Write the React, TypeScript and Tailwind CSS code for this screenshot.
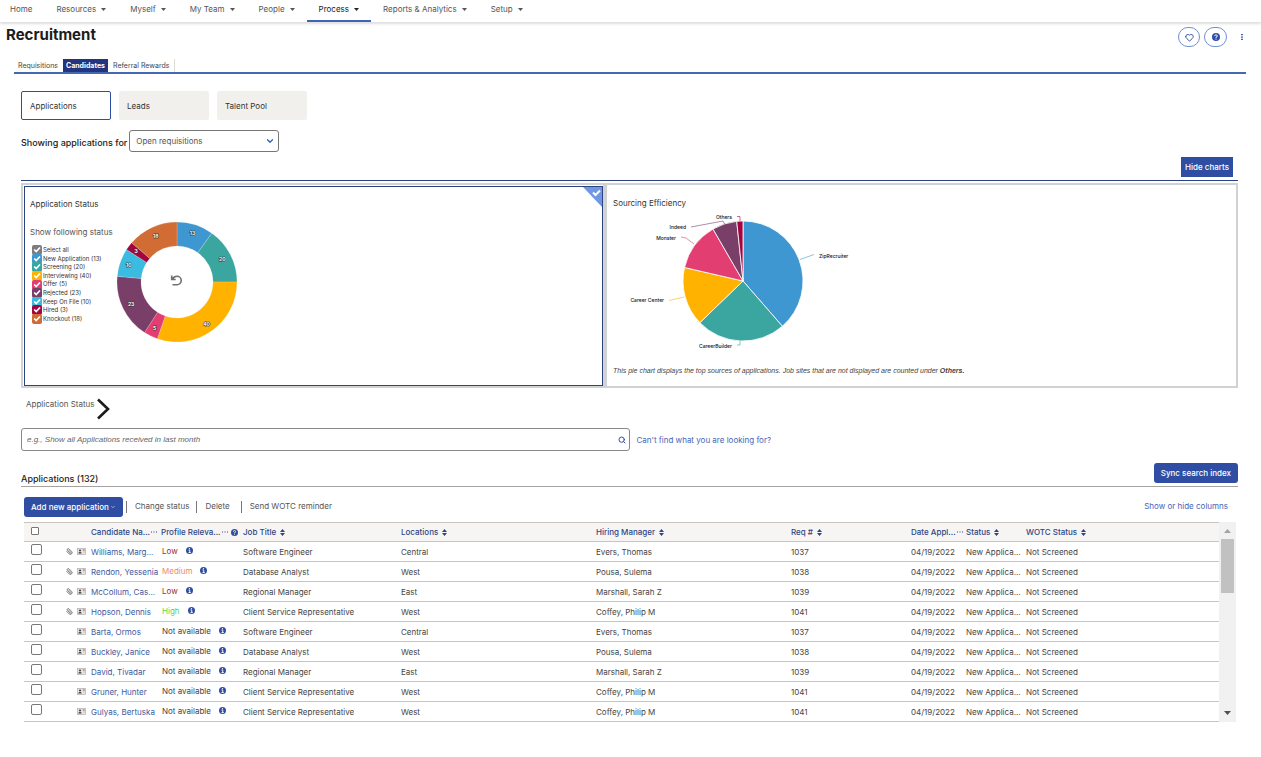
import type { ReactNode } from "react";
import { ChevronDown, Heart, Paperclip, Search } from "lucide-react";

type Slice = { label: string; value: number; color: string };

type Row = {
  name: string;
  relevance: "Low" | "Medium" | "High" | "Not available";
  job: string;
  location: string;
  manager: string;
  req: string;
  attachment?: boolean;
};

const navItems = ["Home", "Resources", "Myself", "My Team", "People", "Process", "Reports & Analytics", "Setup"];

const statuses: Slice[] = [
  { label: "New Application", value: 13, color: "#3e97d1" },
  { label: "Screening", value: 20, color: "#3ba69f" },
  { label: "Interviewing", value: 40, color: "#ffb300" },
  { label: "Offer", value: 5, color: "#e23e72" },
  { label: "Rejected", value: 23, color: "#7a3f69" },
  { label: "Keep On File", value: 10, color: "#3bbbe0" },
  { label: "Hired", value: 3, color: "#a3063f" },
  { label: "Knockout", value: 18, color: "#d06c34" },
];

// value is the share of the circle in degrees
const sources: Slice[] = [
  { label: "ZipRecruiter", value: 139, color: "#3e97d1" },
  { label: "CareerBuilder", value: 87, color: "#3ba69f" },
  { label: "Career Center", value: 57, color: "#ffb300" },
  { label: "Monster", value: 47, color: "#e23e72" },
  { label: "Indeed", value: 24, color: "#7a3f69" },
  { label: "Others", value: 6, color: "#a3063f" },
];

const rows: Row[] = [
  { name: "Williams, Marg...", relevance: "Low", job: "Software Engineer", location: "Central", manager: "Evers, Thomas", req: "1037", attachment: true },
  { name: "Rendon, Yessenia", relevance: "Medium", job: "Database Analyst", location: "West", manager: "Pousa, Sulema", req: "1038", attachment: true },
  { name: "McCollum, Cas...", relevance: "Low", job: "Regional Manager", location: "East", manager: "Marshall, Sarah Z", req: "1039", attachment: true },
  { name: "Hopson, Dennis", relevance: "High", job: "Client Service Representative", location: "West", manager: "Coffey, Philip M", req: "1041", attachment: true },
  { name: "Barta, Ormos", relevance: "Not available", job: "Software Engineer", location: "Central", manager: "Evers, Thomas", req: "1037" },
  { name: "Buckley, Janice", relevance: "Not available", job: "Database Analyst", location: "West", manager: "Pousa, Sulema", req: "1038" },
  { name: "David, Tivadar", relevance: "Not available", job: "Regional Manager", location: "East", manager: "Marshall, Sarah Z", req: "1039" },
  { name: "Gruner, Hunter", relevance: "Not available", job: "Client Service Representative", location: "West", manager: "Coffey, Philip M", req: "1041" },
  { name: "Gulyas, Bertuska", relevance: "Not available", job: "Client Service Representative", location: "West", manager: "Coffey, Philip M", req: "1041" },
];

const relevanceColor = {
  Low: "text-[#a02a2a]",
  Medium: "text-[#f08a5c]",
  High: "text-[#4fd84f]",
  "Not available": "text-[#444]",
};

function point(cx: number, cy: number, r: number, deg: number) {
  const a = ((deg - 90) * Math.PI) / 180;
  return `${(cx + r * Math.cos(a)).toFixed(2)} ${(cy + r * Math.sin(a)).toFixed(2)}`;
}

function arcs(data: Slice[], cx: number, cy: number, outer: number, inner: number) {
  const total = data.reduce((sum, d) => sum + d.value, 0);
  let start = 0;
  return data.map((d) => {
    const end = start + (d.value / total) * 360;
    const large = end - start > 180 ? 1 : 0;
    const mid = (start + end) / 2;
    const path =
      `M${point(cx, cy, outer, start)} A${outer} ${outer} 0 ${large} 1 ${point(cx, cy, outer, end)} ` +
      `L${point(cx, cy, inner, end)} A${inner} ${inner} 0 ${large} 0 ${point(cx, cy, inner, start)} Z`;
    start = end;
    return { ...d, path, mid };
  });
}

function StatusDonut() {
  return (
    <svg width="122" height="122" viewBox="0 0 122 122" role="img" aria-label="Applications by status">
      {arcs(statuses, 61, 61, 60, 36).map((s) => {
        const [x, y] = point(61, 61, 51, s.mid).split(" ").map(Number);
        return (
          <g key={s.label}>
            <path d={s.path} fill={s.color} stroke="#fff" strokeOpacity="0.35" strokeWidth="0.5" />
            <text x={x} y={y + 2} textAnchor="middle" className="fill-white stroke-[#333] text-[5px] font-bold [paint-order:stroke] [stroke-width:1px]">
              {s.value}
            </text>
          </g>
        );
      })}
      <path d="M55.700 54.500V58.500H59.700M56.200 58.200C57.500 56.200 59.200 55.300 61 55.300A4.200 4.200 0 0 1 61 63.700H56.500" fill="none" stroke="#707070" strokeWidth="1.600" />
    </svg>
  );
}

function SourcePie() {
  return (
    <svg width="230" height="142" viewBox="0 0 230 142" role="img" aria-label="Applications by source">
      {arcs(sources, 113, 70, 60, 0).map((s) => (
        <path key={s.label} d={s.path} fill={s.color} stroke="#fff" strokeWidth="0.8" />
      ))}
      <g fill="none" strokeWidth="0.6">
        <path d="M170 48.500L184 43.500" stroke="#3e97d1" />
        <path d="M110 130V134H107" stroke="#3ba69f" />
        <path d="M54.500 86L39 89.500" stroke="#ffb300" />
        <path d="M64 33L56 27L51 26" stroke="#e23e72" />
        <path d="M94.500 13L93 10L61 16" stroke="#7a3f69" />
        <path d="M110 10V5.500H107" stroke="#a3063f" />
      </g>
      <g className="fill-[#111] text-[5px] font-medium">
        <text x="189" y="47">ZipRecruiter</text>
        <text x="102" y="137" textAnchor="end">CareerBuilder</text>
        <text x="34" y="91" textAnchor="end">Career Center</text>
        <text x="46" y="29" textAnchor="end">Monster</text>
        <text x="56" y="18" textAnchor="end">Indeed</text>
        <text x="102" y="8" textAnchor="end">Others</text>
      </g>
    </svg>
  );
}

function Caret() {
  return (
    <svg width="5" height="3" viewBox="0 0 5 3" className="fill-current" aria-hidden="true">
      <path d="M0 0H5L2.500 3Z" />
    </svg>
  );
}

function HelpIcon({ size = 8 }: { size?: number }) {
  return (
    <svg width={size} height={size} viewBox="0 0 16 16" className="shrink-0" aria-hidden="true">
      <circle cx="8" cy="8" r="8" fill="#2f4ea3" />
      <path d="M5.500 6.200A2.500 2.500 0 1 1 8 8.500V10" fill="none" stroke="#fff" strokeWidth="1.800" />
      <circle cx="8" cy="12.200" r="1.200" fill="#fff" />
    </svg>
  );
}

function InfoIcon() {
  return (
    <svg width="7" height="7" viewBox="0 0 14 14" aria-hidden="true">
      <circle cx="7" cy="7" r="7" fill="#2f4ea3" />
      <path d="M5 6H7.500V11M5 11H9.500" fill="none" stroke="#fff" strokeWidth="1.800" />
      <circle cx="7" cy="3.400" r="1.300" fill="#fff" />
    </svg>
  );
}

function CardIcon() {
  return (
    <svg width="9" height="7" viewBox="0 0 18 14" aria-hidden="true">
      <rect x="0.800" y="0.800" width="16.400" height="12.400" fill="#e8e8e8" stroke="#b0b0b0" strokeWidth="1.400" />
      <circle cx="6" cy="5" r="2.200" fill="#444" />
      <path d="M2.500 11C2.500 7 9.500 7 9.500 11Z" fill="#444" />
      <path d="M11.500 4H15.500" stroke="#b33" strokeWidth="1.800" />
      <path d="M13 8H15" stroke="#888" strokeWidth="1.400" />
    </svg>
  );
}

function SortIcon() {
  return (
    <svg width="5" height="7" viewBox="0 0 5 7" fill="#2f4584" className="shrink-0" aria-hidden="true">
      <path d="M2.500 0L5 3H0ZM2.500 7L0 4H5Z" />
    </svg>
  );
}

function Head({ children, dots, help }: { children: ReactNode; dots?: boolean; help?: boolean }) {
  return (
    <th scope="col" className="p-0 text-left font-medium">
      <button type="button" className={dots ? "flex items-center gap-px whitespace-nowrap" : "flex items-center gap-1 whitespace-nowrap"}>
        {children}
        {dots ? (
          <svg width="6" height="2" viewBox="0 0 6 2" fill="#2f4584" aria-hidden="true">
            <path d="M0 0.500H1V1.500H0ZM2.500 0.500H3.500V1.500H2.500ZM5 0.500H6V1.500H5Z" />
          </svg>
        ) : (
          <SortIcon />
        )}
        {help ? <span className="ml-[2px]"><HelpIcon size={7} /></span> : null}
      </button>
    </th>
  );
}

function StatusOption({ id, label, color }: { id: string; label: string; color: string }) {
  return (
    <div className="flex items-center gap-px">
      <span className="grid h-[10px] w-[10px] shrink-0">
        <input id={id} type="checkbox" defaultChecked className="col-start-1 row-start-1 h-[10px] w-[10px] appearance-none rounded-[2px]" style={{ backgroundColor: color }} />
        <svg viewBox="0 0 10 10" className="pointer-events-none col-start-1 row-start-1 h-[10px] w-[10px]" aria-hidden="true">
          <path d="M2.200 4.500L4.200 6.500L8 2.500" fill="none" stroke="#fff" strokeWidth="1.700" />
        </svg>
      </span>
      <label htmlFor={id} className="whitespace-nowrap text-[6px] leading-[8px] text-[#333]">{label}</label>
    </div>
  );
}

function Toolbar() {
  return (
    <div className="flex items-center pl-[3px] pr-[10px] pt-[10px] text-[#555]">
      <button type="button" className="flex h-5 items-center gap-px rounded-[3px] bg-[#2f4ea3] px-[7px] font-medium text-white">
        Add new application
        <ChevronDown className="h-[6px] w-[6px]" />
      </button>
      <span className="ml-[3px] h-3 w-px bg-[#777]" />
      <button type="button" className="pb-[2px] pl-2 pr-1">Change status</button>
      <span className="ml-[3px] h-3 w-px bg-[#777]" />
      <button type="button" className="px-2 pb-[2px]">Delete</button>
      <span className="ml-[3px] h-3 w-px bg-[#777]" />
      <button type="button" className="px-2 pb-[2px]">Send WOTC reminder</button>
      <a href="#columns" className="ml-auto pb-[2px] text-[#4565b8]">Show or hide columns</a>
    </div>
  );
}

function ApplicationsTable() {
  return (
    <div className="mt-[5px] flex pl-[3px] pr-[2px]">
      <table className="w-full min-w-0 table-fixed border-collapse text-[#444]">
        <colgroup>
          <col className="w-[41px]" />
          <col className="w-[26px]" />
          <col className="w-[70px]" />
          <col className="w-[82px]" />
          <col className="w-[158px]" />
          <col className="w-[195px]" />
          <col className="w-[195px]" />
          <col className="w-[120px]" />
          <col className="w-[55px]" />
          <col className="w-[60px]" />
          <col />
        </colgroup>
        <thead>
          <tr className="h-[19px] border-y border-[#c9c4bd] bg-[#f6f5f4] text-[#2f4584]">
            <th scope="col" className="p-0 pb-[2px] text-left">
              <input type="checkbox" aria-label="Select all applications" className="ml-[7px] block h-2 w-2 appearance-none rounded-[1px] border border-[#777] bg-white" />
            </th>
            <td className="p-0" />
            <Head dots>Candidate Na...</Head>
            <Head dots help>Profile Releva...</Head>
            <Head>Job Title</Head>
            <Head>Locations</Head>
            <Head>Hiring Manager</Head>
            <Head>Req #</Head>
            <Head dots>Date Appl...</Head>
            <Head>Status</Head>
            <Head>WOTC Status</Head>
          </tr>
        </thead>
        <tbody>
          {rows.map((row) => (
            <tr key={row.name} className="h-5 border-b border-[#c9c4bd] whitespace-nowrap">
              <td className="p-0 pb-1">
                <input type="checkbox" aria-label={`Select ${row.name}`} className="ml-[7px] block h-[11px] w-[11px] appearance-none rounded-[2px] border border-[#777] bg-white" />
              </td>
              <td className="p-0">
                <span className="flex items-center justify-end gap-1 pr-[5px]">
                  {row.attachment ? <Paperclip className="h-[7px] w-[7px] -scale-x-100 text-[#555]" strokeWidth={2.5} /> : null}
                  <CardIcon />
                </span>
              </td>
              <td className="p-0"><a href="#candidate" className="text-[#4059a0]">{row.name}</a></td>
              <td className="p-0 pb-[2px]">
                <span className={`flex items-center gap-2 pl-px ${relevanceColor[row.relevance]}`}>
                  {row.relevance}
                  <InfoIcon />
                </span>
              </td>
              <td className="p-0">{row.job}</td>
              <td className="p-0">{row.location}</td>
              <td className="p-0">{row.manager}</td>
              <td className="p-0">{row.req}</td>
              <td className="p-0">04/19/2022</td>
              <td className="p-0">New Applica...</td>
              <td className="p-0">Not Screened</td>
            </tr>
          ))}
        </tbody>
      </table>
      <div className="flex w-[17px] shrink-0 flex-col items-center bg-[#f1f1f1]" aria-hidden="true">
        <svg width="7" height="4" viewBox="0 0 7 4" className="mb-[6px] mt-[7px] shrink-0"><path d="M3.500 0L7 4H0Z" fill="#a3a3a3" /></svg>
        <span className="h-[54px] w-[13px] shrink-0 bg-[#c1c1c1]" />
        <svg width="7" height="4" viewBox="0 0 7 4" className="mb-[7px] mt-auto shrink-0"><path d="M0 0H7L3.500 4Z" fill="#505050" /></svg>
      </div>
    </div>
  );
}

export default function App() {
  return (
    <div className="min-h-screen bg-white font-['Inter','Liberation_Sans',sans-serif] text-[8px] leading-[12px] text-[#333]">
      <nav className="flex h-[23px] items-stretch border-b border-[#e3e3e3] shadow-sm">
        {navItems.map((item) => {
          const active = item === "Process";
          const home = item === "Home";
          return (
            <a
              key={item}
              href={`#${item}`}
              className={
                active
                  ? "flex items-center gap-[5px] border-b-2 border-[#3f64b5] px-3 pb-[2px] text-[#222]"
                  : home
                    ? "flex items-center pb-1 pl-[10px] pr-3 text-[#555]"
                    : "flex items-center gap-[5px] px-3 pb-1 text-[#555]"
              }
            >
              {item}
              {home ? null : <Caret />}
            </a>
          );
        })}
      </nav>

      <header className="flex h-[36px] items-start justify-between pl-[6px] pr-[15px]">
        <h1 className="pt-[2px] text-[15px] font-bold leading-[20px] text-[#1c1c1c]">Recruitment</h1>
        <div className="flex items-center gap-1 pt-1">
          <button type="button" aria-label="Favorite" className="grid h-5 w-[22px] place-items-center rounded-full border border-[#6f8fd6] text-[#2f4ea3]">
            <Heart className="h-[9px] w-[9px]" strokeWidth={2.5} />
          </button>
          <button type="button" aria-label="Help" className="grid h-5 w-[23px] place-items-center rounded-full border border-[#6f8fd6]">
            <HelpIcon />
          </button>
          <button type="button" aria-label="More" className="ml-[7px] grid h-5 w-2 place-items-center">
            <svg width="2" height="6" viewBox="0 0 2 6" fill="#4a65ad"><path d="M0 0H2V1.300H0ZM0 2.400H2V3.700H0ZM0 4.700H2V6H0Z" /></svg>
          </button>
        </div>
      </header>

      <div className="ml-[14px] mr-[15px] flex border-b-2 border-[#4568b5] text-[7px] leading-[13px]">
        <button type="button" className="pl-1 pr-[5px] text-[#444]">Requisitions</button>
        <button type="button" className="bg-[#22357e] px-[3px] font-bold text-white">Candidates</button>
        <button type="button" className="border-r border-[#ddd] px-[5px] text-[#444]">Referral Rewards</button>
      </div>

      <main className="pl-[21px] pr-[23px] pt-[17px]">
        <div className="flex gap-2">
          <button type="button" className="h-[29px] w-[90px] rounded-[2px] border border-[#2f4ea3] bg-white px-2 text-left">Applications</button>
          <button type="button" className="h-[29px] w-[90px] rounded-[2px] bg-[#f2f0ed] px-2 text-left">Leads</button>
          <button type="button" className="h-[29px] w-[90px] rounded-[2px] bg-[#f2f0ed] px-2 text-left">Talent Pool</button>
        </div>

        <div className="mt-[10px] flex items-center gap-[2px]">
          <label htmlFor="scope" className="pt-1 text-[9px] font-medium text-[#222]">Showing applications for</label>
          <div className="grid w-[150px] items-center">
            <select id="scope" className="col-start-1 row-start-1 h-[22px] appearance-none rounded-[3px] border border-[#777] bg-white px-[6px] text-[#555]">
              <option>Open requisitions</option>
            </select>
            <ChevronDown className="pointer-events-none col-start-1 row-start-1 mr-1 h-[10px] w-[10px] justify-self-end text-[#2f5fc5]" strokeWidth={3} />
          </div>
        </div>

        <div className="mt-[5px] flex justify-end border-b border-[#2b4382] pb-[3px] pr-[5px]">
          <button type="button" className="h-5 bg-[#2f4ea3] px-1 font-medium text-white">Hide charts</button>
        </div>

        <div className="mt-[2px] grid grid-cols-[584px_1fr] border-2 border-[#d0d2d4]">
          <section className="flex h-[201px] flex-col border-r-4 border-[#d0d2d4] pl-px pt-px">
            <div className="relative flex-1 border border-[#2b4382] pl-[5px] pt-[11px]">
              <h2>Application Status</h2>
              <svg width="19" height="20" viewBox="0 0 19 20" className="absolute right-0 top-0" aria-hidden="true">
                <path d="M0 0H19V20Z" fill="#6f97e3" />
                <path d="M10 5.500L12.500 8L17 3.500" fill="none" stroke="#fff" strokeWidth="2" />
              </svg>
              <div className="flex items-start gap-[3px]">
                <fieldset className="w-[80px]">
                  <legend className="whitespace-nowrap pt-4 text-[#555]">Show following status</legend>
                  <div className="mt-2 grid h-[77px] grid-rows-9 pl-[2px]">
                    <StatusOption id="status-all" label="Select all" color="#7d7d7d" />
                    {statuses.map((s) => (
                      <StatusOption key={s.label} id={`status-${s.label}`} label={`${s.label} (${s.value})`} color={s.color} />
                    ))}
                  </div>
                </fieldset>
                <div className="pt-[11px]"><StatusDonut /></div>
              </div>
            </div>
          </section>

          <section className="flex h-[201px] flex-col pl-[6px] pt-3">
            <h2>Sourcing Efficiency</h2>
            <div className="pl-[17px] pt-[2px]"><SourcePie /></div>
            <p className="mt-auto pb-[9px] font-['Liberation_Sans',sans-serif] text-[7px] italic text-[#444]">
              This pie chart displays the top sources of applications. Job sites that are not displayed are counted under <strong>Others.</strong>
            </p>
          </section>
        </div>

        <div className="flex items-start gap-px pl-[5px] pt-[10px] text-[#555]">
          <span>Application Status</span>
          <svg width="15" height="22" viewBox="0 0 15 22" aria-hidden="true">
            <path d="M2 1.500L12 11L2 20.500" fill="none" stroke="#1b1b1b" strokeWidth="2.600" />
          </svg>
        </div>

        <div className="mt-2 flex items-center gap-[7px]">
          <div className="flex h-[23px] w-1/2 items-center rounded-[3px] border border-[#888] pl-[5px] pr-[3px]">
            <input type="text" aria-label="Search applications" placeholder="e.g., Show all Applications received in last month" className="min-w-0 flex-1 bg-transparent font-['Liberation_Sans',sans-serif] outline-none placeholder:italic placeholder:text-[#666]" />
            <button type="button" aria-label="Search" className="text-[#2f4ea3]"><Search className="h-2 w-2" strokeWidth={3} /></button>
          </div>
          <a href="#help" className="text-[#4565b8]">Can't find what you are looking for?</a>
        </div>

        <div className="mt-3 flex items-end justify-between border-b border-[#a5a29f] pb-[3px]">
          <h2 className="text-[9px] font-medium leading-[9px] text-[#222]">Applications (132)</h2>
          <button type="button" className="h-5 rounded-[3px] bg-[#2f4ea3] px-[7px] font-medium text-white">Sync search index</button>
        </div>

        <Toolbar />
        <ApplicationsTable />
      </main>
    </div>
  );
}
